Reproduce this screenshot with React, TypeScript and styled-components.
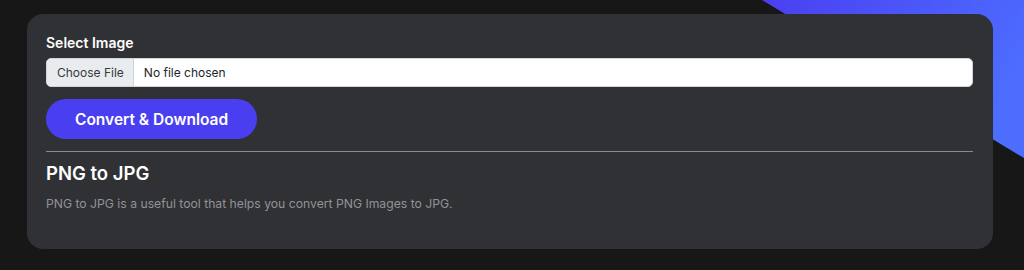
import React from "react";
import styled, { createGlobalStyle } from "styled-components";

const GlobalStyle = createGlobalStyle`
  html, body {
    margin: 0;
    padding: 0;
    background: #171717;
  }
  body {
    font-family: Inter, "Noto Sans", "Liberation Sans", sans-serif;
    -webkit-font-smoothing: antialiased;
  }
`;

export default function App() {
  return (
    <>
      <GlobalStyle />
      <PageStyled>
        <Decoration viewBox="0 0 1024 270" preserveAspectRatio="none" aria-hidden="true">
          <defs>
            <linearGradient id="blueFade" x1="0" y1="0" x2="1" y2="0.4">
              <stop offset="0" stopColor="#4a3ff1" />
              <stop offset="1" stopColor="#4d6dff" />
            </linearGradient>
          </defs>
          <polygon points="762,0 1024,0 1024,158" fill="url(#blueFade)" />
        </Decoration>

        <CardStyled>
          <LabelStyled htmlFor="image-file">Select Image</LabelStyled>
          <FileInput id="image-file" type="file" accept="image/png" />

          <ConvertButton type="button">Convert &amp; Download</ConvertButton>

          <Divider />

          <TitleStyled>PNG to JPG</TitleStyled>
          <DescStyled>
            PNG to JPG is a useful tool that helps you convert PNG Images to JPG.
          </DescStyled>
        </CardStyled>
      </PageStyled>
    </>
  );
}

const PageStyled = styled.div`
  position: relative;
  height: 270px;
  box-sizing: border-box;
  padding: 14px 31px 21px 27px;
  overflow: hidden;
`;

const Decoration = styled.svg`
  position: absolute;
  inset: 0;
  width: 100%;
  height: 100%;
`;

const CardStyled = styled.div`
  position: relative;
  box-sizing: border-box;
  height: 235px;
  background: #303135;
  border-radius: 16px;
  padding: 18px 20px 0 19px;
  display: flex;
  flex-direction: column;
  align-items: flex-start;
`;

const LabelStyled = styled.label`
  display: block;
  color: #ffffff;
  font-size: 14px;
  font-weight: 600;
  line-height: 21px;
  margin-bottom: 5px;
`;

const FileInput = styled.input`
  box-sizing: border-box;
  width: 100%;
  height: 29px;
  padding: 0 10px;
  font-family: inherit;
  font-size: 12px;
  color: #212529;
  background: #ffffff;
  border: 1px solid #ced4da;
  border-radius: 5px;
  overflow: hidden;

  &::file-selector-button {
    height: 29px;
    margin: -1px 10px -1px -10px;
    padding: 0 9px 0 10px;
    font-family: inherit;
    font-size: 12px;
    color: #343a40;
    background: #e9ecef;
    border: 0;
    border-right: 1px solid #ced4da;
    border-radius: 0;
  }
`;

const ConvertButton = styled.button`
  margin-top: 12px;
  height: 40px;
  padding: 0 29px;
  border: 0;
  border-radius: 20px;
  background: #4a3ff0;
  color: #ffffff;
  font-family: inherit;
  font-size: 15.5px;
  font-weight: 600;
  cursor: pointer;
`;

const Divider = styled.hr`
  width: 100%;
  margin: 12px 0 0;
  border: 0;
  border-top: 1px solid #8a8a8c;
`;

const TitleStyled = styled.h2`
  margin: 8px 0 0;
  color: #ffffff;
  font-size: 18.5px;
  font-weight: 600;
  line-height: 27px;
`;

const DescStyled = styled.p`
  margin: 7px 0 0;
  color: #929396;
  font-size: 12.2px;
  line-height: 20px;
`;
